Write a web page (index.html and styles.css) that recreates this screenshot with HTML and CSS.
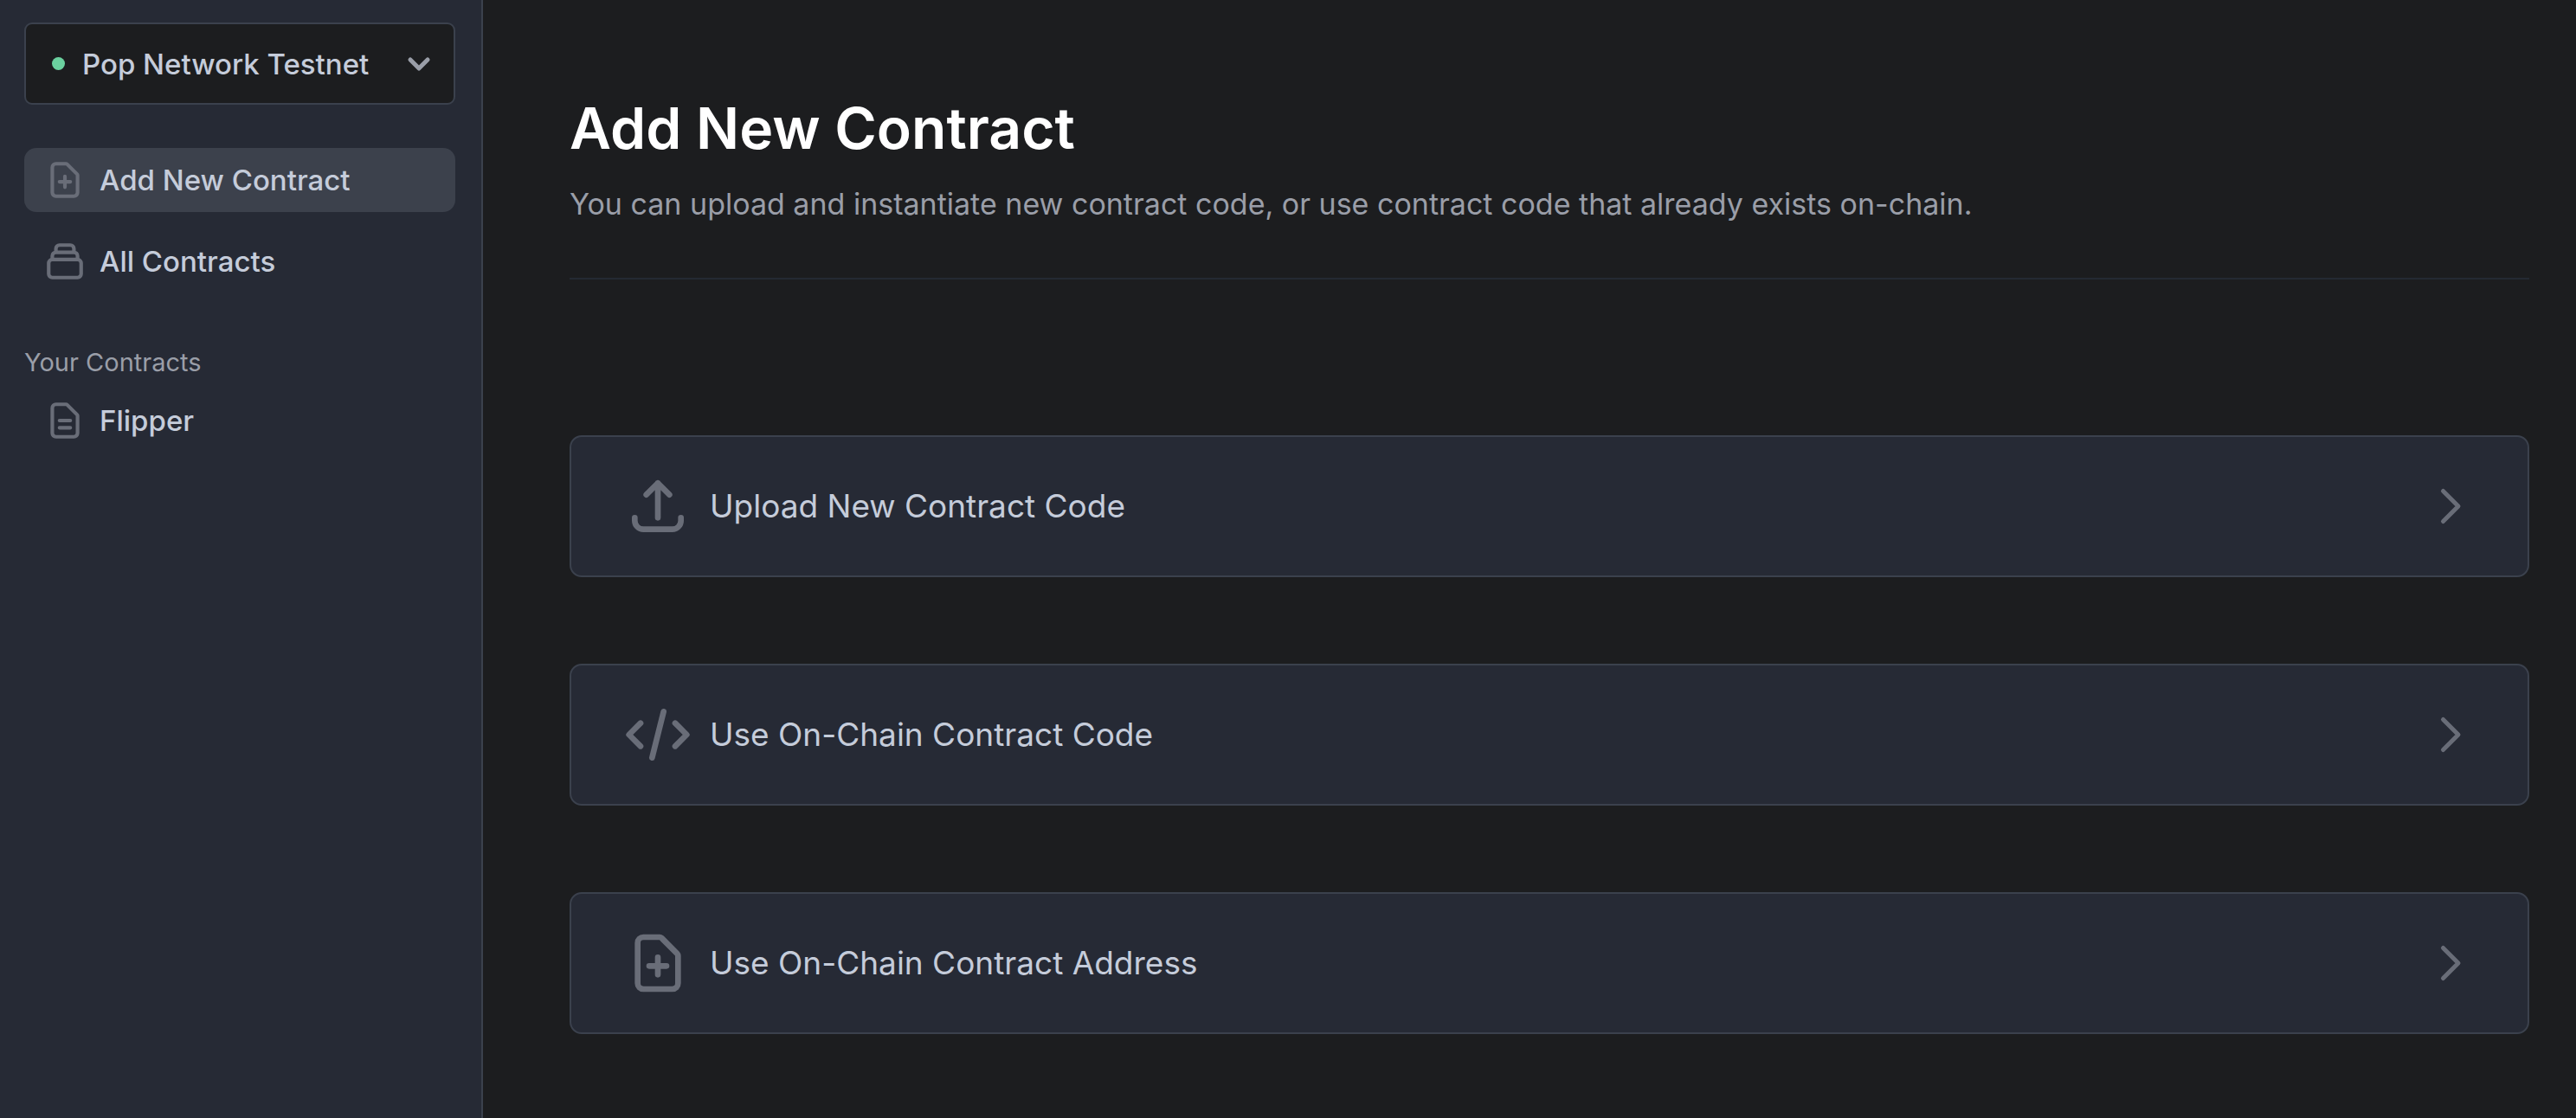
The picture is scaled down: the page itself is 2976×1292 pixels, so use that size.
FILE: index.html
```html
<!DOCTYPE html>
<html lang="en">
<head>
  <meta charset="utf-8">
  <meta name="viewport" content="width=device-width, initial-scale=1">
  <title>Add New Contract</title>
  <link rel="stylesheet" href="styles.css">
</head>
<body>
  <div class="app">
    <aside class="sidebar">
      <div class="network">
        <span class="network-dot"></span>
        <select class="network-select" aria-label="Network">
          <option selected>Pop Network Testnet</option>
        </select>
        <svg class="network-chevron" viewBox="0 0 20 20" aria-hidden="true"><path d="M5.293 7.293a1 1 0 011.414 0L10 10.586l3.293-3.293a1 1 0 111.414 1.414l-4 4a1 1 0 01-1.414 0l-4-4a1 1 0 010-1.414z"/></svg>
      </div>

      <nav class="nav" aria-label="Main">
        <a class="nav-item nav-item-active" href="#add" aria-current="page">
          <svg class="nav-icon" viewBox="0 0 24 24" aria-hidden="true"><path d="M9 13h6m-3-3v6m5 5H7a2 2 0 01-2-2V5a2 2 0 012-2h5.586a1 1 0 01.707.293l5.414 5.414a1 1 0 01.293.707V19a2 2 0 01-2 2z"/></svg>
          Add New Contract
        </a>
        <a class="nav-item" href="#contracts">
          <svg class="nav-icon" viewBox="0 0 24 24" aria-hidden="true"><path d="M19 11H5m14 0a2 2 0 012 2v6a2 2 0 01-2 2H5a2 2 0 01-2-2v-6a2 2 0 012-2m14 0V9a2 2 0 00-2-2M5 11V9a2 2 0 012-2m0 0V5a2 2 0 012-2h6a2 2 0 012 2v2M7 7h10"/></svg>
          All Contracts
        </a>
      </nav>

      <nav class="saved" aria-labelledby="saved-title">
        <h2 class="saved-title" id="saved-title">Your Contracts</h2>
        <a class="nav-item" href="#flipper">
          <svg class="nav-icon" viewBox="0 0 24 24" aria-hidden="true"><path d="M9 12h6m-6 4h6m2 5H7a2 2 0 01-2-2V5a2 2 0 012-2h5.586a1 1 0 01.707.293l5.414 5.414a1 1 0 01.293.707V19a2 2 0 01-2 2z"/></svg>
          Flipper
        </a>
      </nav>
    </aside>

    <main class="main">
      <header class="page-header">
        <h1 class="page-title">Add New Contract</h1>
        <p class="page-intro">You can upload and instantiate new contract code, or use contract code that already exists on-chain.</p>
      </header>

      <div class="choices">
        <button class="choice" type="button">
          <svg class="choice-icon" viewBox="0 0 24 24" aria-hidden="true"><path d="M4 16v1a3 3 0 003 3h10a3 3 0 003-3v-1m-4-8l-4-4m0 0L8 8m4-4v12"/></svg>
          <span class="choice-label">Upload New Contract Code</span>
          <svg class="choice-chevron" viewBox="0 0 24 24" aria-hidden="true"><path d="M9 5l7 7-7 7"/></svg>
        </button>
        <button class="choice" type="button">
          <svg class="choice-icon" viewBox="0 0 24 24" aria-hidden="true"><path d="M10 20l4-16m4 4l4 4-4 4M6 16l-4-4 4-4"/></svg>
          <span class="choice-label">Use On-Chain Contract Code</span>
          <svg class="choice-chevron" viewBox="0 0 24 24" aria-hidden="true"><path d="M9 5l7 7-7 7"/></svg>
        </button>
        <button class="choice" type="button">
          <svg class="choice-icon" viewBox="0 0 24 24" aria-hidden="true"><path d="M9 13h6m-3-3v6m5 5H7a2 2 0 01-2-2V5a2 2 0 012-2h5.586a1 1 0 01.707.293l5.414 5.414a1 1 0 01.293.707V19a2 2 0 01-2 2z"/></svg>
          <span class="choice-label">Use On-Chain Contract Address</span>
          <svg class="choice-chevron" viewBox="0 0 24 24" aria-hidden="true"><path d="M9 5l7 7-7 7"/></svg>
        </button>
      </div>
    </main>
  </div>
</body>
</html>
```
FILE: styles.css
```css
:root {
  --page: #1c1d1f;
  --panel: #262a35;
  --panel-active: #3c414c;
  --line: #3b414d;
  --divider: #242a33;
  --text: #c5ccda;
  --muted: #9a9ea8;
  --icon: #696d78;
  --online: #6bd19f;
}

*,
*::before,
*::after {
  box-sizing: border-box;
}

body {
  margin: 0;
  background: var(--page);
  color: var(--text);
  font-family: Inter, "Liberation Sans", sans-serif;
  font-size: 33px;
  line-height: 50px;
}

.app {
  display: flex;
  min-height: 100vh;
}

/* Sidebar */

.sidebar {
  flex: none;
  width: 558px;
  padding: 26px 30px 26px 28px;
  background: var(--panel);
  border-right: 2px solid var(--line);
}

.network {
  display: flex;
  align-items: center;
  height: 95px;
  padding: 0 15px 0 30px;
  background: var(--page);
  border: 2px solid var(--line);
  border-radius: 9px;
}

.network-dot {
  flex: none;
  width: 15px;
  height: 15px;
  border-radius: 50%;
  background: var(--online);
}

.network-select {
  flex: 1;
  min-width: 0;
  padding: 0 0 0 20px;
  appearance: none;
  background: transparent;
  border: 0;
  color: inherit;
  font: inherit;
  font-weight: 500;
}

.network-chevron {
  flex: none;
  width: 50px;
  height: 50px;
  fill: var(--muted);
  pointer-events: none;
}

.nav {
  display: flex;
  flex-direction: column;
  gap: 20px;
  margin-top: 50px;
}

.nav-item {
  display: flex;
  align-items: center;
  gap: 15px;
  padding: 12px 22px;
  border-radius: 14px;
  color: inherit;
  font-weight: 500;
  text-decoration: none;
}

.nav-item-active {
  background: var(--panel-active);
}

.nav-icon {
  flex: none;
  width: 50px;
  height: 50px;
}

.nav-icon,
.choice-icon,
.choice-chevron {
  fill: none;
  stroke: var(--icon);
  stroke-width: 2;
  stroke-linecap: round;
  stroke-linejoin: round;
}

.saved {
  margin-top: 60px;
}

.saved-title {
  margin: 0 0 10px;
  color: var(--muted);
  font-size: 29px;
  font-weight: 400;
  line-height: 40px;
}

/* Main column */

.main {
  flex: 1;
  min-width: 0;
  padding: 100px 54px 96px 100px;
}

.page-header {
  padding-bottom: 60px;
  border-bottom: 2px solid var(--divider);
}

.page-title {
  margin: 0;
  color: #fff;
  font-size: 66px;
  font-weight: 600;
  line-height: 96px;
}

.page-intro {
  margin: 15px 0 0;
  color: var(--muted);
  font-size: 34px;
}

.choices {
  display: flex;
  flex-direction: column;
  gap: 100px;
  margin-top: 180px;
}

.choice {
  display: flex;
  align-items: center;
  gap: 20px;
  width: 100%;
  padding: 40px 60px;
  background: var(--panel);
  border: 2px solid var(--line);
  border-radius: 14px;
  color: inherit;
  font: inherit;
  font-size: 37px;
  text-align: left;
  cursor: pointer;
}

.choice-icon {
  flex: none;
  width: 80px;
  height: 80px;
}

.choice-label {
  flex: 1;
}

.choice-chevron {
  flex: none;
  width: 60px;
  height: 60px;
}
```
